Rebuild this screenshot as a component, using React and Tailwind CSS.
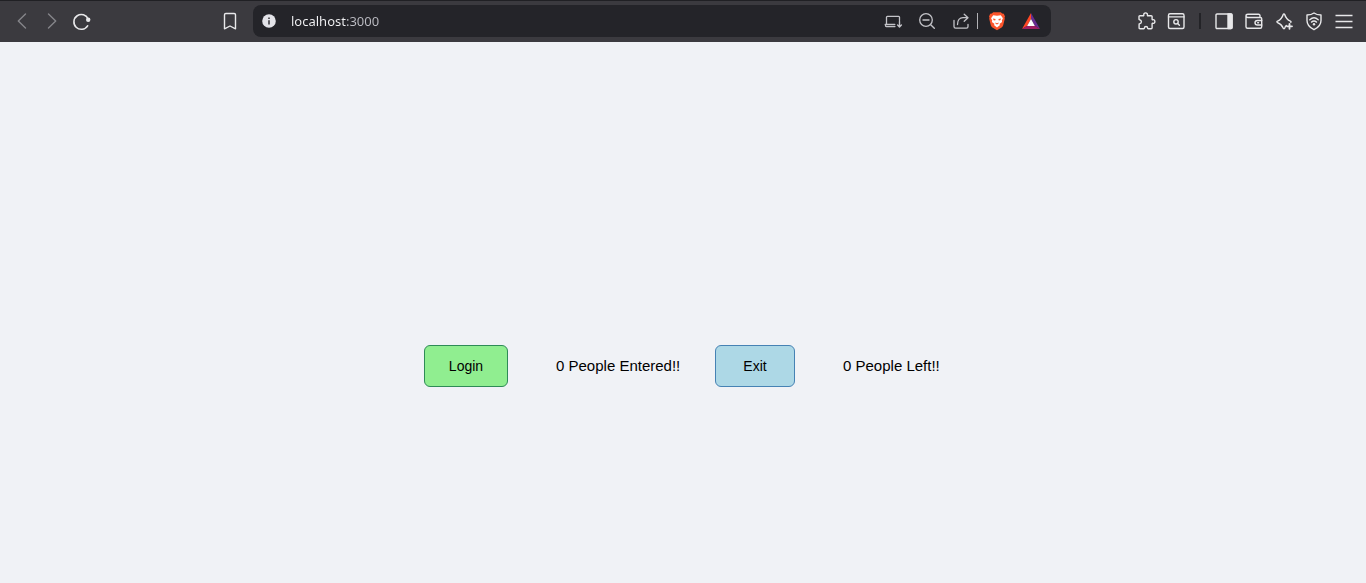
import { useState } from "react";

function Icon({ children, className = "" }) {
  return (
    <svg
      viewBox="0 0 20 20"
      width="20"
      height="20"
      fill="none"
      stroke="currentColor"
      strokeWidth="1.4"
      strokeLinecap="round"
      strokeLinejoin="round"
      aria-hidden="true"
      className={className}
    >
      {children}
    </svg>
  );
}

function ToolButton({ label, className = "w-[30px] text-[#e8e8ea]", children }) {
  return (
    <button
      type="button"
      aria-label={label}
      className={`flex h-8 shrink-0 items-center justify-center ${className}`}
    >
      <Icon>{children}</Icon>
    </button>
  );
}

const addressButton = "w-[34px] text-[#c3c3c8]";

function BrowserBar() {
  const [url, setUrl] = useState("localhost:3000");
  return (
    <header className="flex h-[42px] items-center border-t border-[#202024] bg-[#3b3a3f] pb-px">
      <nav aria-label="Navigation" className="flex w-[253px] shrink-0 items-center pl-[7px]">
        <ToolButton label="Back" className="w-[30px] text-[#85858a]">
          <path d="M13.500 3 6.300 10l7.200 7" />
        </ToolButton>
        <ToolButton label="Forward" className="w-[30px] text-[#85858a]">
          <path d="m6.500 3 7.200 7-7.200 7" />
        </ToolButton>
        <ToolButton label="Reload">
          <path d="M16.200 8.200A7.400 7.400 0 1 0 15.600 14.800" strokeWidth="1.600" />
          <circle cx="16.200" cy="8.800" r="2.200" fill="currentColor" stroke="none" />
        </ToolButton>
        <div className="mr-2 ml-auto">
          <ToolButton label="Bookmark">
            <path d="M4.500 3.800c0-.7.5-1.300 1.300-1.300h8.400c.8 0 1.300.6 1.300 1.300v14L10 15l-5.500 2.800Z" />
          </ToolButton>
        </div>
      </nav>

      <div className="flex h-8 min-w-0 flex-1 items-center rounded-lg bg-[#242429] pr-[3px] pl-2">
        <button type="button" aria-label="Site information" className="shrink-0">
          <svg viewBox="0 0 16 16" width="16" height="16" aria-hidden="true">
            <circle cx="8" cy="8" r="6.800" fill="#e3e3e8" />
            <path d="M7.200 4.500h1.600v1.500H7.200zM7.200 7.200h1.600v4.300H7.200z" fill="#3b3a3f" />
          </svg>
        </button>
        <input
          aria-label="Address"
          value={url}
          onChange={(event) => setUrl(event.target.value)}
          className="ml-3.5 h-6 min-w-0 flex-1 bg-[linear-gradient(to_right,#f4f4f6_56px,#bdbdc4_56px)] bg-clip-text font-['Noto_Sans',sans-serif] text-[13px] text-transparent caret-white outline-none"
        />
        <ToolButton label="Install page" className={addressButton}>
          <path
            d="M3.500 13.500V6.200c0-.6.300-.9.900-.9h11.200c.6 0 .9.300.9.900v3.300M2.200 13.500h9.600M2.500 13.500v1.300c0 .5.300.8.800.8h8.700"
            strokeWidth="1.300"
          />
          <path d="M16.500 10.500v5.200M14.600 14l1.900 1.900 1.900-1.900" strokeWidth="1.400" />
        </ToolButton>
        <ToolButton label="Zoom" className={addressButton}>
          <circle cx="9" cy="9" r="6.300" strokeWidth="1.300" />
          <path d="M6 9h6M13.700 13.700l3.600 3.500" strokeWidth="1.400" />
        </ToolButton>
        <div className="flex h-4 items-center border-r border-[#b2b2b6]">
          <ToolButton label="Share" className="w-[33px] text-[#c3c3c8]">
            <path d="M3 9.500v6c0 1 .6 1.600 1.600 1.600h10.800c1 0 1.600-.6 1.600-1.600v-2" strokeWidth="1.300" />
            <path d="M6.500 13.500c0-4.300 2.200-6.800 5.500-6.800h4.800M13.200 3.200l3.800 3.500-3.800 3.600" strokeWidth="1.300" />
          </ToolButton>
        </div>
        <div className="ml-0.5 flex">
          <ToolButton label="Brave Shields" className={addressButton}>
            <path
              d="M6.200 1.200h7.600l1.300 1.400 1.700.2 1.200 2.600-.5 1.400.3 1-1.600 6.400c-.3 1-.8 1.700-1.600 2.200L10 19.200l-4.600-2.800c-.8-.5-1.300-1.200-1.600-2.200L2.200 7.800l.3-1L2 5.400l1.200-2.600 1.700-.2Z"
              fill="#fb542b"
              stroke="none"
            />
            <path
              d="M6.200 4.200 10 4.800l3.800-.6 2.100 3-1.100 2.200.3 1.600-2.400 1.800.1 1.400L10 16.500l-2.800-2.300.1-1.400-2.400-1.800.3-1.600-1.100-2.200Z"
              fill="#fff"
              stroke="none"
            />
            <path
              d="m5.800 7.500 2.800.6-.4 1.500-1.500-.4ZM14.200 7.500l-2.800.6.4 1.500 1.500-.4ZM8.300 11.500l1.700.7 1.700-.7-.3 1.300-1.400.7-1.400-.7Z"
              fill="#fb542b"
              stroke="none"
            />
          </ToolButton>
          <ToolButton label="Brave Rewards" className={addressButton}>
            <g stroke="none">
              <path d="M10 2 1 18l5.200-3.200L10 8Z" fill="#ff4724" />
              <path d="m10 2 9 16-5.200-3.200L10 8Z" fill="#662d91" />
              <path d="M1 18h18l-5.200-3.200H6.200Z" fill="#9e1f63" />
              <path d="m10 8 3.900 6.900H6.100Z" fill="#fff" />
            </g>
          </ToolButton>
        </div>
      </div>

      <div className="flex w-[315px] shrink-0 items-center justify-end pr-[7px]">
        <ToolButton label="Extensions">
          <path d="M3.900 4.700h3.400c.4 0 .6-.3.500-.7-.3-1.300.6-2.100 1.800-2.100s2.100.8 1.800 2.100c-.1.4.1.7.5.7h3.300c.6 0 .9.300.9.900v2.600c0 .4.300.6.700.5 1.100-.3 2.100.5 2.100 1.800s-1 2.200-2.100 1.800c-.4-.1-.7.1-.7.500v4c0 .6-.3.900-.9.900h-3c-.4 0-.6-.2-.6-.6 0-1-.7-1.600-1.600-1.600s-1.600.6-1.600 1.600c0 .4-.2.600-.6.600H4c-.6 0-.9-.3-.9-.9v-3.400c0-.4.200-.6.500-.6 1.200-.2 1.800-1 1.800-2s-.7-1.800-1.800-2c-.4 0-.6-.3-.6-.7V5.600c0-.6.3-.9.900-.9Z" />
        </ToolButton>
        <ToolButton label="Search tabs">
          <rect x="2.500" y="2.700" width="15.500" height="14.800" rx="1.500" />
          <path d="M2.500 5.900h15.500" />
          <circle cx="10" cy="10.800" r="2.200" />
          <path d="m11.700 12.500 1.700 1.700" />
        </ToolButton>
        <div className="flex w-[18px] justify-center">
          <div className="h-4 w-0.5 bg-[#232327]" />
        </div>
        <ToolButton label="Sidebar">
          <rect x="2" y="3" width="16" height="14.500" rx="1" />
          <path d="M14 3h3c.6 0 1 .4 1 1v12.500c0 .6-.4 1-1 1h-3Z" fill="currentColor" />
        </ToolButton>
        <ToolButton label="Wallet">
          <path d="M16 6.500V4.700c0-.8-.5-1.400-1.400-1.400H4C2.800 3.300 2 4 2 5v10.700c0 .9.500 1.500 1.500 1.500h12.700c1 0 1.500-.6 1.500-1.500V7.800c0-.8-.5-1.300-1.400-1.300H4C2.800 6.500 2 6 2 5" />
          <path d="M17.700 9.500h-4.200c-1.600 0-2.500.9-2.500 2.200s.9 2.300 2.500 2.300h4.200" />
          <path d="M13.700 11.800h.8" />
        </ToolButton>
        <ToolButton label="Assistant">
          <path d="M12.300 14.500c-.7.700-1.200 1.500-1.600 2.600-.3.700-1.200.7-1.500 0-1.100-2.900-2.300-4.200-5.700-5.500-.8-.3-.8-1.200 0-1.500 3.400-1.400 4.600-2.800 5.700-6.600.3-.9 1.200-.9 1.500 0 1.100 3.800 2.300 5.200 5.700 6.600.7.300.8.8.4 1.200" />
          <path d="M15.500 12.800v5M13 15.300h5" strokeWidth="1.800" />
        </ToolButton>
        <ToolButton label="VPN">
          <path d="M10 2c2 1.500 4.500 2 7 2v5.500c0 4-2.800 7.200-7 9.200-4.200-2-7-5.200-7-9.200V4c2.500 0 5-.5 7-2Z" />
          <path d="M5.800 8.700c2.500-2.200 5.900-2.200 8.400 0M7.500 11.100c1.500-1.300 3.500-1.300 5 0" />
          <circle cx="10" cy="13.200" r="1.200" fill="currentColor" stroke="none" />
        </ToolButton>
        <ToolButton label="Menu">
          <path d="M1.500 4.500h17M1.500 10.500h17M1.500 16.500h17" strokeWidth="1.700" strokeLinecap="butt" />
        </ToolButton>
      </div>
    </header>
  );
}

export default function App() {
  const [entered, setEntered] = useState(0);
  const [left, setLeft] = useState(0);

  return (
    <div className="flex min-h-screen flex-col bg-[#f0f2f6] font-['Liberation_Sans',Arial,sans-serif] text-black">
      <BrowserBar />
      <main className="flex flex-1 items-center justify-center gap-8 pt-[107px]">
        <section className="flex items-center gap-12">
          <button
            type="button"
            onClick={() => setEntered(entered + 1)}
            className="h-[42px] w-[84px] rounded-md border border-[#2e8b57] bg-[#90ee90] text-sm"
          >
            Login
          </button>
          <p className="min-w-[127px] text-[15px]">{entered} People Entered!!</p>
        </section>
        <section className="flex items-center gap-12">
          <button
            type="button"
            onClick={() => setLeft(left + 1)}
            className="h-[42px] w-20 rounded-md border border-[#4682b4] bg-[#add8e6] text-sm"
          >
            Exit
          </button>
          <p className="min-w-[99px] text-[15px]">{left} People Left!!</p>
        </section>
      </main>
    </div>
  );
}
